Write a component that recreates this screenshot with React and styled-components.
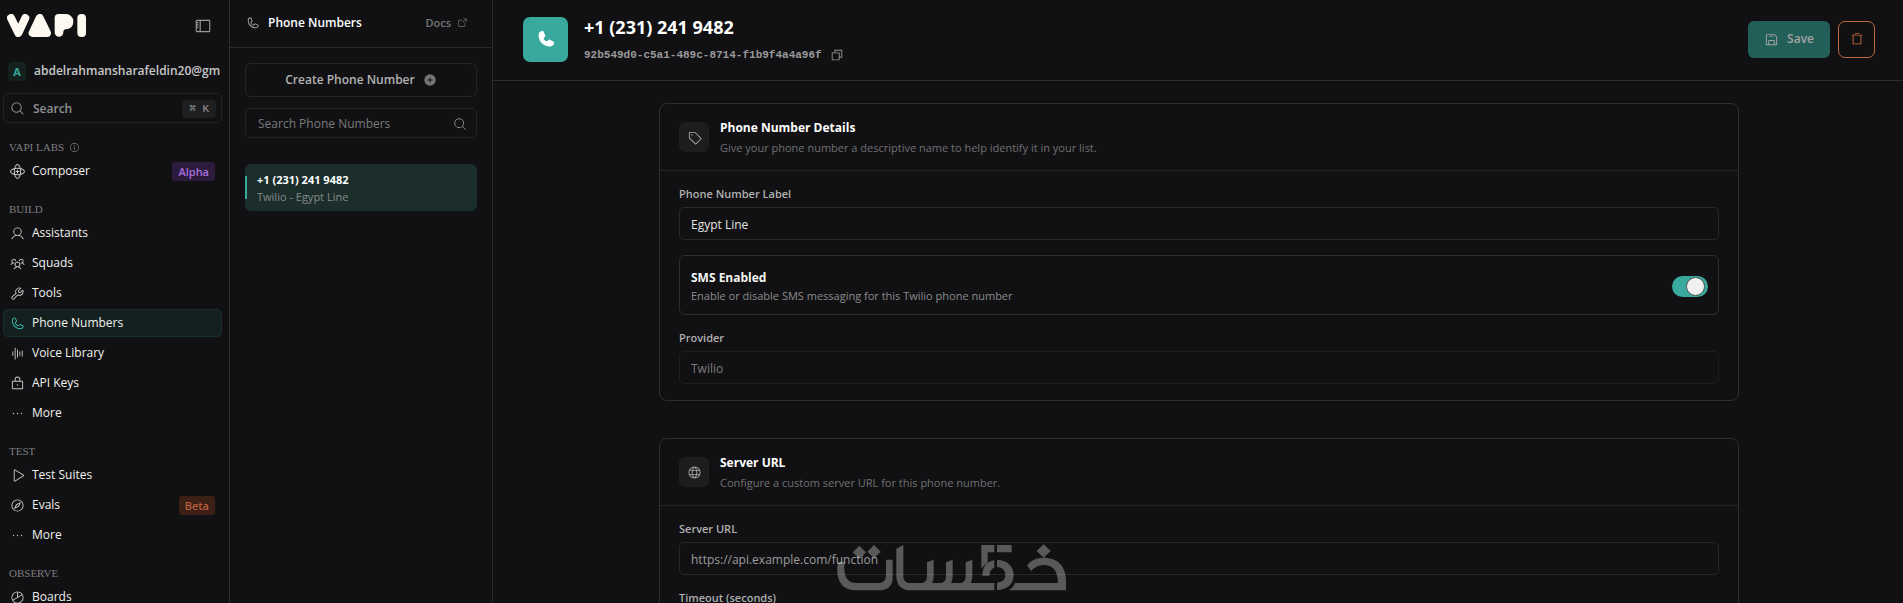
import React from 'react'
import styled, { createGlobalStyle } from 'styled-components'
import {
  PiArrowSquareOut, PiChartPie, PiCompass, PiCopy, PiDotsThree, PiFloppyDisk,
  PiGlobe, PiInfo, PiLock, PiMagnifyingGlass, PiPhone, PiPhoneFill, PiPlay,
  PiPlusCircleFill, PiSidebar, PiTag, PiTrashSimple, PiUser, PiUsersThree,
  PiWaveform, PiWrench,
} from 'react-icons/pi'

const GlobalStyle = createGlobalStyle`
  * {
    box-sizing: border-box;
  }
  body {
    margin: 0;
    background: #111113;
    color: #eeeeea;
    font-family: "Open Sans", "Noto Sans", sans-serif;
    font-size: 12px;
    line-height: 16px;
  }
  button, input {
    font: inherit;
    color: inherit;
  }
  h1, h2, h3, p {
    margin: 0;
  }
`

const Page = styled.div`
  position: relative;
  display: flex;
  height: 100vh;
  overflow: hidden;
`

/* sidebar */

const Sidebar = styled.aside`
  flex: none;
  width: 230px;
  padding: 0 7px 0 3px;
  border-right: 1px solid #2f2f31;
  overflow: hidden;
`

const Brand = styled.div`
  display: flex;
  align-items: center;
  justify-content: space-between;
  height: 51px;
  padding: 0 10px 0 4px;
`

const IconButton = styled.button`
  display: flex;
  padding: 0;
  border: 0;
  background: none;
  color: #9a9a9c;
  font-size: ${(props) => props.$size || 16}px;
  cursor: pointer;
`

const Account = styled.div`
  display: flex;
  align-items: center;
  gap: 8px;
  height: 40px;
  padding-left: 5px;
  overflow: hidden;
  white-space: nowrap;
  font-weight: 600;
  color: #c8c8c8;
`

const Avatar = styled.span`
  flex: none;
  width: 18px;
  height: 19px;
  border-radius: 4px;
  background: #15211f;
  color: #36a99b;
  font-size: 11px;
  font-weight: 700;
  line-height: 19px;
  text-align: center;
`

const SearchButton = styled.button`
  display: flex;
  align-items: center;
  gap: 8px;
  width: 100%;
  height: 30px;
  margin-top: 2px;
  padding: 1px 5px 0 6px;
  border: 1px solid #242426;
  border-radius: 5px;
  background: none;
  color: #909092;
  font-weight: 600;
  text-align: left;

  span {
    flex: 1;
  }
  svg {
    font-size: 15px;
  }
`

const Keys = styled.kbd`
  padding: 0 7px;
  border-radius: 4px;
  background: #1f1f21;
  color: #9a9a9c;
  font: 11px/18px "Liberation Mono", "DejaVu Sans Mono", monospace;
`

const Nav = styled.nav`
  padding-top: 14px;
`

const Group = styled.section`
  & + & {
    margin-top: 14px;
  }
`

const GroupLabel = styled.h3`
  display: flex;
  align-items: center;
  gap: 5px;
  height: 20px;
  padding-left: 6px;
  color: #7d7d7f;
  font: 11px/20px "Liberation Serif", serif;
`

const GroupItems = styled.div`
  display: flex;
  flex-direction: column;
  gap: 2px;
`

const NavLink = styled.a`
  display: flex;
  align-items: center;
  gap: 7px;
  height: 28px;
  padding: 0 6px;
  border: 1px solid ${(props) => (props.$active ? '#1b302d' : 'transparent')};
  border-radius: 5px;
  background: ${(props) => (props.$active ? '#14201f' : 'none')};
  color: #f2f2ee;
  font-weight: 500;
  text-decoration: none;

  svg {
    flex: none;
    width: 15px;
    height: 15px;
    color: ${(props) => (props.$active ? '#36b5a5' : '#c4c4c6')};
  }
  span {
    flex: 1;
  }
`

const Badge = styled.em`
  padding: 0 6px;
  border-radius: 3px;
  background: ${(props) => (props.$tone === 'purple' ? '#2d1b3d' : '#3d2015')};
  color: ${(props) => (props.$tone === 'purple' ? '#a970dd' : '#b85f3c')};
  font-size: 11px;
  font-style: normal;
  font-weight: 600;
  line-height: 19px;
`

/* list column */

const ListColumn = styled.section`
  flex: none;
  width: 263px;
  border-right: 1px solid #2a2a2c;
`

const ListHeader = styled.header`
  display: flex;
  align-items: center;
  gap: 8px;
  height: 48px;
  padding: 0 24px 2px 16px;
  border-bottom: 1px solid #2a2a2c;

  > svg {
    font-size: 14px;
    color: #a8a8aa;
  }
  h2 {
    flex: 1;
    font-size: 12px;
    font-weight: 600;
    color: #ffffff;
  }
`

const DocsLink = styled.a`
  display: flex;
  align-items: center;
  gap: 6px;
  color: #757577;
  font-size: 11px;
  font-weight: 600;
  text-decoration: none;
`

const ListBody = styled.div`
  display: flex;
  flex-direction: column;
  gap: 11px;
  padding: 15px 15px 0;
`

const CreateButton = styled.button`
  display: flex;
  align-items: center;
  justify-content: center;
  gap: 8px;
  height: 34px;
  border: 1px solid #242426;
  border-radius: 6px;
  background: none;
  color: #b4b4b4;
  font-weight: 600;

  svg {
    font-size: 14px;
    color: #757577;
  }
`

const SearchField = styled.label`
  display: flex;
  align-items: center;
  height: 30px;
  padding: 1px 9px 0 12px;
  border: 1px solid #242426;
  border-radius: 5px;

  input {
    flex: 1;
    min-width: 0;
    padding: 0;
    border: 0;
    outline: 0;
    background: none;
  }
  input::placeholder {
    color: #7a7a7c;
    opacity: 1;
  }
  svg {
    font-size: 14px;
    color: #909092;
  }
`

const NumberItem = styled.a`
  display: flex;
  align-items: center;
  height: 47px;
  margin-top: 15px;
  border-radius: 6px;
  background: #1b2e2c;
  color: #ffffff;
  text-decoration: none;

  &::before {
    content: "";
    width: 2px;
    height: 23px;
    margin-right: 10px;
    background: #36a99b;
  }
  strong, small {
    display: block;
    font-size: 11px;
    line-height: 17px;
  }
  strong {
    font-weight: 700;
  }
  small {
    color: #858b8a;
  }
`

/* main */

const Main = styled.main`
  flex: 1;
  min-width: 0;
  display: flex;
  flex-direction: column;
`

const MainHeader = styled.header`
  display: flex;
  align-items: center;
  gap: 16px;
  flex: none;
  height: 81px;
  padding: 0 28px 2px 30px;
  border-bottom: 1px solid #2f2f31;
`

const PhoneTile = styled.div`
  display: flex;
  align-items: center;
  justify-content: center;
  width: 45px;
  height: 45px;
  border-radius: 7px;
  background: #39a99d;
  color: #ffffff;
  font-size: 20px;
`

const Heading = styled.div`
  flex: 1;

  h1 {
    font-size: 18px;
    font-weight: 700;
    line-height: 24px;
    color: #ffffff;
  }
`

const NumberId = styled.div`
  display: flex;
  align-items: center;
  gap: 8px;
  margin-top: 8px;
  color: #9a9a9c;
  font: 700 11px/16px "Liberation Mono", monospace;
`

const Actions = styled.div`
  display: flex;
  gap: 8px;
`

const SaveButton = styled.button`
  display: flex;
  align-items: center;
  gap: 8px;
  height: 37px;
  padding: 0 16px;
  border: 0;
  border-radius: 6px;
  background: #235f59;
  color: #a3a3a3;
  font-weight: 600;

  svg {
    font-size: 15px;
  }
`

const DeleteButton = styled.button`
  display: flex;
  align-items: center;
  justify-content: center;
  width: 37px;
  height: 37px;
  padding: 0;
  border: 1px solid #c0683f;
  border-radius: 7px;
  background: none;
  color: #d06a3c;
  font-size: 14px;
`

const Content = styled.div`
  flex: 1;
  min-height: 0;
  padding: 22px 24px 22px 26px;
  overflow-y: auto;
  scrollbar-width: none;
`

const Card = styled.section`
  max-width: 1080px;
  margin: 0 auto 37px;
  border: 1px solid #2f2f31;
  border-radius: 8px;
`

const CardHeader = styled.header`
  display: flex;
  align-items: center;
  gap: 11px;
  height: 67px;
  padding-left: 19px;
  border-bottom: 1px solid #242426;

  h2 {
    padding-top: 2px;
    font-size: 12px;
    font-weight: 700;
    line-height: 20px;
    color: #ffffff;
  }
`

const CardIcon = styled.div`
  display: flex;
  align-items: center;
  justify-content: center;
  width: 30px;
  height: 30px;
  border-radius: 6px;
  background: #1d1d1f;
  color: #a5a5a7;
  font-size: 15px;
`

const Hint = styled.p`
  font-size: 11px;
  line-height: ${(props) => props.$line || 16}px;
  color: ${(props) => props.$color || '#707072'};
`

const CardBody = styled.div`
  display: flex;
  flex-direction: column;
  gap: 15px;
  padding: 15px 19px 16px;
`

const Field = styled.label`
  display: flex;
  flex-direction: column;
  gap: 5px;
  color: #b0b0b0;
  font-size: 11px;
  font-weight: 600;
`

const TextInput = styled.input`
  width: 100%;
  height: 33px;
  padding: 1px 11px 0;
  border: 1px solid #28282a;
  border-radius: 5px;
  outline: 0;
  background: none;
  color: #e4e4e2;
  font-size: 12px;
  font-weight: 400;

  &::placeholder {
    color: #9c9c9e;
    opacity: 1;
  }
  &:disabled {
    border-color: #1e1e20;
    color: #7c7c7e;
  }
`

const SmsRow = styled.label`
  display: flex;
  align-items: center;
  justify-content: space-between;
  height: 60px;
  padding: 2px 10px 0 11px;
  border: 1px solid #2f2f31;
  border-radius: 6px;

  h3 {
    font-size: 12px;
    font-weight: 700;
    line-height: 20px;
    color: #f4f4f0;
  }
`

const Toggle = styled.input`
  appearance: none;
  display: flex;
  align-items: center;
  justify-content: flex-end;
  width: 36px;
  height: 21px;
  margin: 0;
  padding: 0 3px;
  border-radius: 11px;
  background: #39a99d;

  &::before {
    content: "";
    width: 17px;
    height: 17px;
    border: 1px solid #4b5553;
    border-radius: 50%;
    background: #f0f0f0;
  }
  &:not(:checked) {
    justify-content: flex-start;
    background: #2f2f31;
  }
`

/* stamp floating over the page */
const Stamp = styled.svg`
  position: absolute;
  left: 50%;
  bottom: 11px;
  width: 230px;
  height: 49px;
  transform: translateX(-50%);
  opacity: 0.3;
  pointer-events: none;
`

const Logo = () => (
  <svg width="79" height="23" viewBox="21 42 237 69" role="img" aria-label="Vapi" fill="#fdf9f0" stroke="#fdf9f0" strokeLinecap="round" strokeLinejoin="round">
    <path d="M33 54 L55 99 L76 54" fill="none" strokeWidth="24" />
    <path d="M119 54 L98 99 H141 Z" strokeWidth="24" />
    <path stroke="none" d="M176 42 H198 A22 22 0 0 1 220 64 V66 A22 22 0 0 1 198 88 Q190 88 190 97 A13 13 0 0 1 164 97 V54 A12 12 0 0 1 176 42 Z" />
    <rect stroke="none" x="232" y="42" width="26" height="69" rx="12" />
  </svg>
)

const ComposerIcon = () => (
  <svg viewBox="0 0 16 16" fill="none" stroke="currentColor" strokeWidth="1.1">
    <ellipse cx="8" cy="8" rx="3.4" ry="7.4" />
    <ellipse cx="8" cy="8" rx="7.4" ry="3.4" />
    <path d="M8 6v4M6 8h4" />
  </svg>
)

const KhamsatStamp = () => (
  <Stamp viewBox="48 38 690 147" fill="#ffffff" stroke="none" aria-hidden="true">
    <path d="M115 46l20 20-20 20-20-20zM159 44l20 20-20 20-20-20zM668 42l21 20-21 20-21-20z" />
    <path d="M52 94h20c-3 12-3 24 0 37 4 18 16 27 36 27h62c17 0 25-8 25-25V88h20v52c0 27-14 40-42 40h-68c-32 0-50-16-55-46-2-14-2-27 2-40z" />
    <path d="M226 55l21-11v92c0 15 7 22 21 22h30c14 0 20-7 20-22V96l20-8v48c0 9-2 16-5 22h22c14 0 20-7 20-22V96l20-8v48c0 9-2 16-5 22h24c14 0 20-7 20-22V96l20-8v48c0 9-2 16-5 22h71v22H271c-30 0-45-15-45-44z" />
    <path d="M481 44h39v22h-20v32c-9 5-14 10-19 18zM528 44h44v22h-44z" />
    <path d="M484 136c0-27 14-43 36-46v22c-9 2-14 10-15 24z" />
    <path d="M528 88c32 2 50 20 50 46s-18 44-50 46v-23c17-2 25-9 25-23s-8-22-25-24z" />
    <path d="M618 105c12-15 29-23 50-23 43 0 67 26 67 70v28H563c10-6 15-12 19-22h129c-1-36-14-54-43-54-15 0-27 6-38 18z" />
  </Stamp>
)

const groups = [
  {
    label: 'VAPI LABS',
    info: true,
    items: [{ name: 'Composer', icon: ComposerIcon, badge: 'Alpha', tone: 'purple' }],
  },
  {
    label: 'BUILD',
    items: [
      { name: 'Assistants', icon: PiUser },
      { name: 'Squads', icon: PiUsersThree },
      { name: 'Tools', icon: PiWrench },
      { name: 'Phone Numbers', icon: PiPhone, active: true },
      { name: 'Voice Library', icon: PiWaveform },
      { name: 'API Keys', icon: PiLock },
      { name: 'More', icon: PiDotsThree },
    ],
  },
  {
    label: 'TEST',
    items: [
      { name: 'Test Suites', icon: PiPlay },
      { name: 'Evals', icon: PiCompass, badge: 'Beta', tone: 'orange' },
      { name: 'More', icon: PiDotsThree },
    ],
  },
  {
    label: 'OBSERVE',
    items: [{ name: 'Boards', icon: PiChartPie }],
  },
]

const App = () => {
  return (
    <>
      <GlobalStyle />
      <Page>
        <Sidebar>
          <Brand>
            <Logo />
            <IconButton $size={18} aria-label="Toggle sidebar"><PiSidebar /></IconButton>
          </Brand>
          <Account>
            <Avatar>A</Avatar>
            abdelrahmansharafeldin20@gm
          </Account>
          <SearchButton>
            <PiMagnifyingGlass />
            <span>Search</span>
            <Keys>⌘ K</Keys>
          </SearchButton>
          <Nav>
            {groups.map((group) => (
              <Group key={group.label}>
                <GroupLabel>
                  {group.label}
                  {group.info && <PiInfo />}
                </GroupLabel>
                <GroupItems>
                  {group.items.map((item) => (
                    <NavLink href="#" key={item.name} $active={item.active}>
                      <item.icon />
                      <span>{item.name}</span>
                      {item.badge && <Badge $tone={item.tone}>{item.badge}</Badge>}
                    </NavLink>
                  ))}
                </GroupItems>
              </Group>
            ))}
          </Nav>
        </Sidebar>

        <ListColumn>
          <ListHeader>
            <PiPhone />
            <h2>Phone Numbers</h2>
            <DocsLink href="#">Docs <PiArrowSquareOut /></DocsLink>
          </ListHeader>
          <ListBody>
            <CreateButton>Create Phone Number <PiPlusCircleFill /></CreateButton>
            <SearchField>
              <input type="text" placeholder="Search Phone Numbers" aria-label="Search Phone Numbers" />
              <PiMagnifyingGlass />
            </SearchField>
            <NumberItem href="#">
              <div>
                <strong>+1 (231) 241 9482</strong>
                <small>Twilio - Egypt Line</small>
              </div>
            </NumberItem>
          </ListBody>
        </ListColumn>

        <Main>
          <MainHeader>
            <PhoneTile><PiPhoneFill /></PhoneTile>
            <Heading>
              <h1>+1 (231) 241 9482</h1>
              <NumberId>
                92b549d0-c5a1-489c-8714-f1b9f4a4a96f
                <IconButton $size={14} aria-label="Copy id"><PiCopy /></IconButton>
              </NumberId>
            </Heading>
            <Actions>
              <SaveButton><PiFloppyDisk /> Save</SaveButton>
              <DeleteButton aria-label="Delete"><PiTrashSimple /></DeleteButton>
            </Actions>
          </MainHeader>
          <Content>
            <Card>
              <CardHeader>
                <CardIcon><PiTag /></CardIcon>
                <div>
                  <h2>Phone Number Details</h2>
                  <Hint $line={20}>Give your phone number a descriptive name to help identify it in your list.</Hint>
                </div>
              </CardHeader>
              <CardBody>
                <Field>
                  Phone Number Label
                  <TextInput type="text" defaultValue="Egypt Line" />
                </Field>
                <SmsRow>
                  <div>
                    <h3>SMS Enabled</h3>
                    <Hint $color="#8c8c8e">Enable or disable SMS messaging for this Twilio phone number</Hint>
                  </div>
                  <Toggle type="checkbox" role="switch" defaultChecked />
                </SmsRow>
                <Field>
                  Provider
                  <TextInput type="text" defaultValue="Twilio" disabled />
                </Field>
              </CardBody>
            </Card>
            <Card>
              <CardHeader>
                <CardIcon><PiGlobe /></CardIcon>
                <div>
                  <h2>Server URL</h2>
                  <Hint $line={20}>Configure a custom server URL for this phone number.</Hint>
                </div>
              </CardHeader>
              <CardBody>
                <Field>
                  Server URL
                  <TextInput type="url" placeholder="https://api.example.com/function" />
                </Field>
                <Field>
                  Timeout (seconds)
                  <TextInput type="number" defaultValue="20" />
                </Field>
              </CardBody>
            </Card>
          </Content>
        </Main>
        <KhamsatStamp />
      </Page>
    </>
  )
}

export default App
